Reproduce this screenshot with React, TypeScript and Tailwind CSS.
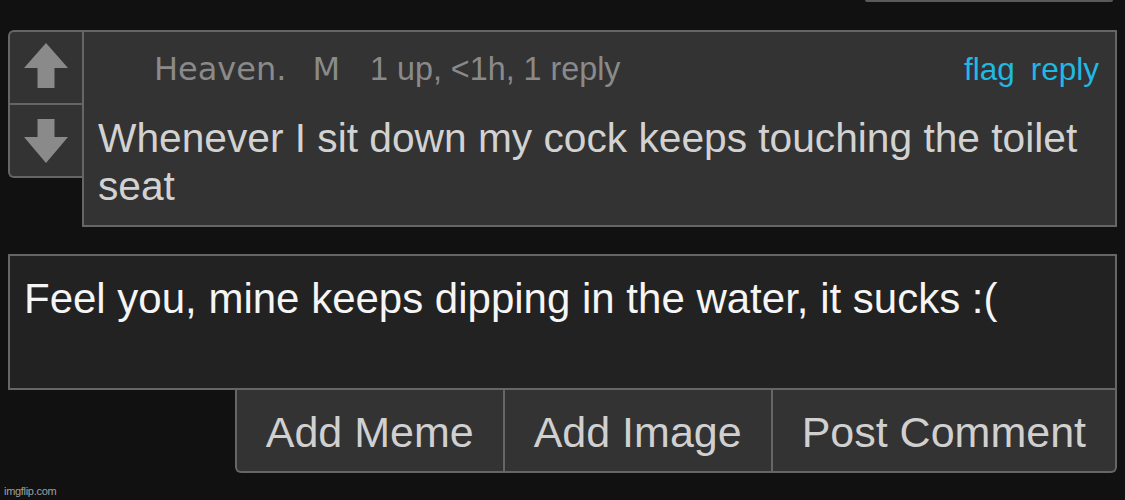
import React from 'react';

const UpArrow: React.FC = () => (
  <svg width="44" height="45" viewBox="0 0 44 45">
    <polygon points="22,0 44,25 30.5,25 30.5,45 13.5,45 13.5,25 0,25" fill="#8a8a8a" />
  </svg>
);

const DownArrow: React.FC = () => (
  <svg width="44" height="44" viewBox="0 0 44 44">
    <polygon points="13.5,0 30.5,0 30.5,18 44,18 22,44 0,18 13.5,18" fill="#8a8a8a" />
  </svg>
);

const arial = { fontFamily: '"Liberation Sans", Arial, sans-serif' };
const dejavu = { fontFamily: '"DejaVu Sans", Verdana, sans-serif' };

const App: React.FC = () => {
  const buttons = ['Add Meme', 'Add Image', 'Post Comment'];

  return (
    <div className="w-[1125px] h-[500px] overflow-hidden bg-[#111111] flex flex-col px-[8px]" style={arial}>
      {/* edge of the box above */}
      <div className="flex justify-end pr-[4px]">
        <div className="w-[248px] h-[2px] bg-[#5a5a5a] rounded-b-[3px]" />
      </div>

      {/* comment */}
      <div className="flex items-start mt-[28px]">
        <div className="w-[74px] flex flex-col border-l-2 border-t-2 border-b-2 border-[#666666] rounded-l-[6px] bg-[#333333]">
          <div className="h-[71px] flex items-center justify-center pb-[4px]">
            <UpArrow />
          </div>
          <div className="h-[2px] bg-[#666666]" />
          <div className="h-[71px] flex items-center justify-center">
            <DownArrow />
          </div>
        </div>

        <div className="flex-1 border-2 border-[#666666] bg-[#333333] pl-[14px] pr-[16px] pt-[17px] pb-[15px]">
          <div className="flex items-baseline h-[40px] leading-[40px] text-[32px] text-[#8a8a8a]">
            <span className="ml-[56px]" style={dejavu}>
              Heaven.
            </span>
            <span className="ml-[26px]" style={dejavu}>
              M
            </span>
            <span className="ml-[30px] text-[32.3px]">1 up, &lt;1h, 1 reply</span>
            <div className="ml-auto flex gap-[16px] text-[#22b8e4] text-[31.5px]">
              <span>flag</span>
              <span>reply</span>
            </div>
          </div>
          <p className="mt-[25px] text-[40.7px] leading-[48px] text-[#d2d2d2]">
            Whenever I sit down my cock keeps touching the toilet seat
          </p>
        </div>
      </div>

      {/* reply box */}
      <div className="mt-[27px] h-[136px] border-2 border-[#666666] bg-[#222222] pl-[14px] pt-[19px]">
        <p className="text-[42px] leading-[48px] text-[#f5f5f5]">
          Feel you, mine keeps dipping in the water, it sucks :(
        </p>
      </div>

      <div className="self-end flex h-[83px] border-l-2 border-r-2 border-b-2 border-[#666666] rounded-b-[6px] bg-[#333333] -mt-[2px] relative top-[2px]">
        {buttons.map((label, i) => (
          <div
            key={label}
            className={`px-[29px] pt-[18px] text-[43px] leading-[48px] text-[#d0d0d0] ${i > 0 ? 'border-l-2 border-[#666666]' : ''}`}
          >
            {label}
          </div>
        ))}
      </div>

      <div className="mt-[13px] -ml-[4px] text-[11px] leading-[14px] tracking-[-0.3px] text-[#a0a0a0]">imgflip.com</div>
    </div>
  );
};

export default App;
